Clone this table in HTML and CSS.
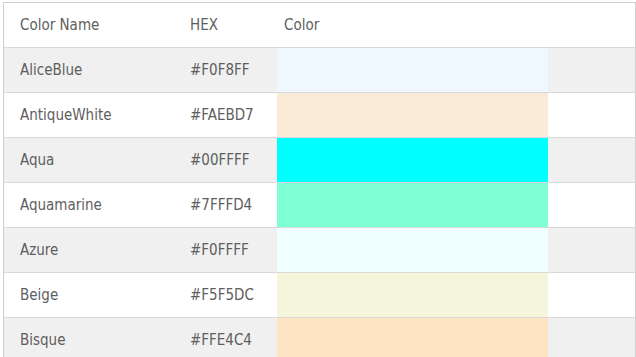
FILE: index.html
```html
<!DOCTYPE html>
<html>
<head>
<meta charset="utf-8">
<link rel="stylesheet" href="styles.css">
</head>
<body>
<div class="wrap">
  <div class="table">
    <div class="row head">
      <div class="cell name">Color Name</div>
      <div class="cell hex">HEX</div>
      <div class="cell color">Color</div>
      <div class="cell rest"></div>
    </div>
    <div class="row odd">
      <div class="cell name">AliceBlue</div>
      <div class="cell hex">#F0F8FF</div>
      <div class="cell swatch" style="background:#F0F8FF"></div>
      <div class="cell rest"></div>
    </div>
    <div class="row">
      <div class="cell name">AntiqueWhite</div>
      <div class="cell hex">#FAEBD7</div>
      <div class="cell swatch" style="background:#FAEBD7"></div>
      <div class="cell rest"></div>
    </div>
    <div class="row odd">
      <div class="cell name">Aqua</div>
      <div class="cell hex">#00FFFF</div>
      <div class="cell swatch" style="background:#00FFFF"></div>
      <div class="cell rest"></div>
    </div>
    <div class="row">
      <div class="cell name">Aquamarine</div>
      <div class="cell hex">#7FFFD4</div>
      <div class="cell swatch" style="background:#7FFFD4"></div>
      <div class="cell rest"></div>
    </div>
    <div class="row odd">
      <div class="cell name">Azure</div>
      <div class="cell hex">#F0FFFF</div>
      <div class="cell swatch" style="background:#F0FFFF"></div>
      <div class="cell rest"></div>
    </div>
    <div class="row">
      <div class="cell name">Beige</div>
      <div class="cell hex">#F5F5DC</div>
      <div class="cell swatch" style="background:#F5F5DC"></div>
      <div class="cell rest"></div>
    </div>
    <div class="row odd">
      <div class="cell name">Bisque</div>
      <div class="cell hex">#FFE4C4</div>
      <div class="cell swatch" style="background:#FFE4C4"></div>
      <div class="cell rest"></div>
    </div>
  </div>
</div>
</body>
</html>
```
FILE: styles.css
```css
html, body {
  margin: 0;
  padding: 0;
  background: #fff;
}
.wrap {
  padding: 2px 0 0 3px;
}
.table {
  border: 1px solid #cfcfcf;
  border-bottom: none;
  font-family: "DejaVu Sans Condensed", "DejaVu Sans", sans-serif;
  font-size: 15px;
  color: #5e5e5e;
}
.row {
  display: grid;
  grid-template-columns: 170px 103px 271px 1fr;
  height: 44px;
  border-bottom: 1px solid #d9d9d9;
  background: #fff;
}
.row.odd {
  background: #f0f0f0;
}
.cell {
  display: flex;
  align-items: center;
}
.name, .hex {
  padding-left: 16px;
}
.color {
  padding-left: 7px;
}
```
